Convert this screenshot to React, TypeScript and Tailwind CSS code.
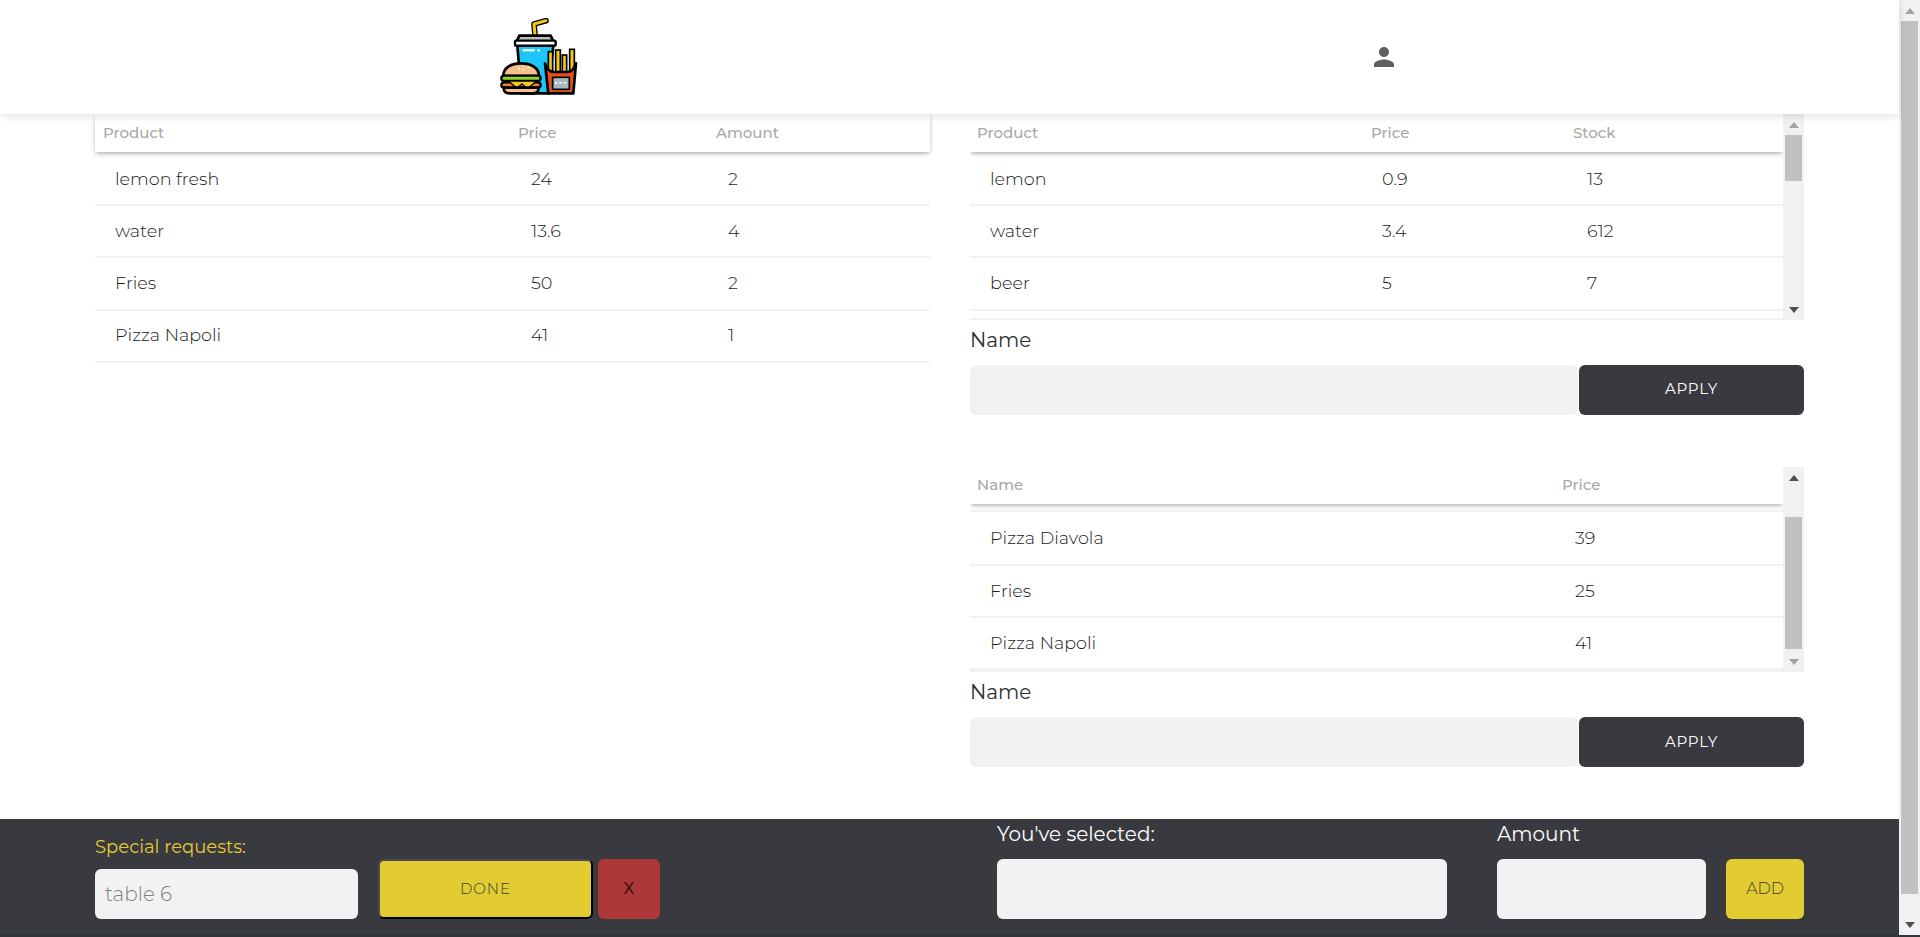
const FONT = "font-['Montserrat','Inter','Liberation_Sans',sans-serif]";

const CART = [
  ['lemon fresh', '24', '2'],
  ['water', '13.6', '4'],
  ['Fries', '50', '2'],
  ['Pizza Napoli', '41', '1'],
];

const DRINKS = [
  ['lemon', '0.9', '13'],
  ['water', '3.4', '612'],
  ['beer', '5', '7'],
];

const FOOD = [
  ['Pizza Diavola', '39'],
  ['Fries', '25'],
  ['Pizza Napoli', '41'],
];

// burger + drink + fries logo
const Logo = () => (
  <svg width="84" height="84" viewBox="171 45 252 252">
    <path d="M285 105 L282 72 L318 62" fill="none" stroke="#000" strokeWidth="17" strokeLinecap="round" strokeLinejoin="round" />
    <path d="M285 105 L282 72 L318 62" fill="none" stroke="#f5c71a" strokeWidth="9" strokeLinecap="round" strokeLinejoin="round" />
    <path d="M232 136 L244 280 H325 L340 136 Z" fill="#1cc6fb" stroke="#000" strokeWidth="8" />
    <path d="M238 107 H332 L340 124 H230 Z" fill="#bdbdbd" stroke="#000" strokeWidth="8" strokeLinejoin="round" />
    <rect x="225" y="122" width="122" height="15" rx="3" fill="#fff" stroke="#000" strokeWidth="7" />
    <rect x="248" y="148" width="36" height="6" fill="#fff" />
    <rect x="292" y="148" width="8" height="6" fill="#fff" />
    <path d="M190 228 C190 203 212 190 243 190 C274 190 297 203 297 228 Z" fill="#f6c08a" stroke="#000" strokeWidth="8" strokeLinejoin="round" />
    <rect x="234" y="203" width="6" height="5" fill="#fff" />
    <rect x="262" y="200" width="6" height="5" fill="#fff" />
    <rect x="248" y="207" width="5" height="4" fill="#fff" />
    <rect x="184" y="227" width="118" height="16" rx="8" fill="#8fd42e" stroke="#000" strokeWidth="7" />
    <rect x="184" y="247" width="118" height="16" rx="8" fill="#ef7d3b" stroke="#000" strokeWidth="7" />
    <path d="M205 243 H290 L262 266 L246 252 L230 264 Z" fill="#f5c71a" stroke="#000" strokeWidth="4" strokeLinejoin="round" />
    <path d="M191 263 H296 C296 274 289 280 278 280 H209 C198 280 191 274 191 263 Z" fill="#f6c08a" stroke="#000" strokeWidth="8" strokeLinejoin="round" />
    <rect x="325" y="155" width="13" height="62" fill="#f5c71a" stroke="#000" strokeWidth="5" />
    <rect x="347" y="150" width="14" height="67" fill="#f5c71a" stroke="#000" strokeWidth="5" />
    <rect x="367" y="165" width="13" height="52" fill="#f5c71a" stroke="#000" strokeWidth="5" />
    <rect x="389" y="148" width="14" height="69" fill="#f5c71a" stroke="#000" strokeWidth="5" />
    <path d="M315 190 C322 210 332 216 342 216 H382 C394 216 402 208 408 190 L400 280 H325 Z" fill="#e84e1b" stroke="#000" strokeWidth="8" strokeLinejoin="round" />
    <rect x="338" y="232" width="50" height="36" fill="#a9b8bf" stroke="#000" strokeWidth="5" />
    <rect x="345" y="246" width="7" height="5" fill="#fff" />
    <rect x="358" y="246" width="7" height="5" fill="#fff" />
    <rect x="371" y="246" width="7" height="5" fill="#fff" />
  </svg>
);

const UserIcon = () => (
  <svg width="30" height="30" viewBox="0 0 24 24" fill="#5f5f5f">
    <path d="M12 12c2.21 0 4-1.79 4-4s-1.79-4-4-4-4 1.79-4 4 1.79 4 4 4zm0 2c-2.67 0-8 1.34-8 4v2h16v-2c0-2.66-5.33-4-8-4z" />
  </svg>
);

const Arrow = ({ up, color }: { up?: boolean; color: string }) => (
  <div className="h-[21px] flex items-center justify-center">
    <svg width="10" height="6" viewBox="0 0 10 6">
      <path d={up ? 'M5 0 L10 6 H0 Z' : 'M0 0 H10 L5 6 Z'} fill={color} />
    </svg>
  </div>
);

// hand drawn version of the browser's scrollbar
const ScrollTrack = ({ top, height, upColor, downColor }: { top: number; height: number; upColor: string; downColor: string }) => (
  <div className="w-[21px] h-full bg-[#f1f1f1] flex flex-col shrink-0">
    <Arrow up color={upColor} />
    <div className="flex-1 px-[2px]">
      <div className="bg-[#c1c1c1]" style={{ marginTop: top, height }} />
    </div>
    <Arrow color={downColor} />
  </div>
);

const HeaderCell = ({ children, className }: { children: React.ReactNode; className?: string }) => (
  <div className={`text-[15px] font-medium text-[#a8a8a8] ${className ?? ''}`}>{children}</div>
);

const Field = ({ label, lift }: { label: string; lift?: boolean }) => (
  <div>
    <div className="text-[20px] leading-[24px] text-[#2e2f33] mt-[8px] mb-[13px]">{label}</div>
    <div className="flex h-[50px]">
      <div className="w-[608px] bg-[#f2f2f2] rounded-[6px]" />
      <button className={`ml-[1px] flex-1 bg-[#393a3f] rounded-[6px] text-white text-[15px] tracking-[0.8px] ${lift ? 'pb-[2px]' : ''}`}>APPLY</button>
    </div>
  </div>
);

const HEAD_SHADOW = 'shadow-[0_2px_5px_-1px_rgba(0,0,0,0.4)]';
const ROW_TEXT = 'text-[17.6px] font-light text-[#18191c]';

export default function App() {
  return (
    <div className={`h-[937px] w-full overflow-hidden flex flex-col bg-white text-[#393a3f] ${FONT}`}>
      <div className="h-[935px] flex">
        <div className="w-[1899px] h-full flex flex-col">
          {/* top nav */}
          <header className="h-[114px] shrink-0 bg-white shadow-[0_2px_8px_rgba(0,0,0,0.12)] relative z-10 flex items-center pl-[497px]">
            <Logo />
            <div className="ml-[788px]">
              <UserIcon />
            </div>
          </header>

          <main className="flex-1 flex pl-[95px]">
            {/* cart */}
            <section className="w-[835px]">
              <div className={`h-[38px] flex items-center pl-[8px] ${HEAD_SHADOW}`}>
                <HeaderCell className="w-[415px]">Product</HeaderCell>
                <HeaderCell className="w-[198px]">Price</HeaderCell>
                <HeaderCell>Amount</HeaderCell>
              </div>
              <div className="h-[2px]" />
              {CART.map((row) => (
                <div key={row[0]} className={`h-[52.2px] flex items-center border-b-2 border-[#f1f1f1] pl-[20px] ${ROW_TEXT}`}>
                  <div className="w-[416px]">{row[0]}</div>
                  <div className="w-[197px]">{row[1]}</div>
                  <div>{row[2]}</div>
                </div>
              ))}
            </section>

            <section className="w-[834px] ml-[40px]">
              {/* drinks */}
              <div className="h-[206px] flex bg-[#f1f1f1]">
                <div className="flex-1 overflow-hidden">
                  <div className={`h-[38px] bg-white flex items-center pl-[7px] pr-[5px] relative ${HEAD_SHADOW}`}>
                    <HeaderCell className="w-[394px]">Product</HeaderCell>
                    <HeaderCell className="w-[202px]">Price</HeaderCell>
                    <HeaderCell>Stock</HeaderCell>
                  </div>
                  <div className="h-[2px] bg-white" />
                  {DRINKS.map((row) => (
                    <div key={row[0]} className={`h-[52.2px] bg-white flex items-center border-b-2 border-[#f1f1f1] pl-[20px] ${ROW_TEXT}`}>
                      <div className="w-[392px]">{row[0]}</div>
                      <div className="w-[205px]">{row[1]}</div>
                      <div>{row[2]}</div>
                    </div>
                  ))}
                  <div className="h-[7.4px] bg-white" />
                </div>
                <ScrollTrack top={0} height={46} upColor="#a3a3a3" downColor="#505050" />
              </div>
              <Field label="Name" lift />

              {/* food */}
              <div className="h-[205px] flex bg-[#f1f1f1] mt-[52px]">
                <div className="flex-1 overflow-hidden">
                  <div className={`h-[37px] bg-white flex items-center pl-[7px] pr-[5px] relative ${HEAD_SHADOW}`}>
                    <HeaderCell className="w-[585px]">Name</HeaderCell>
                    <HeaderCell>Price</HeaderCell>
                  </div>
                  <div className="h-[6px] bg-white" />
                  <div className="h-[2px] bg-[#f1f1f1]" />
                  <div>
                    {FOOD.map((row) => (
                      <div key={row[0]} className={`h-[52px] first:h-[54px] bg-white flex items-center border-b-2 border-[#f1f1f1] pl-[20px] ${ROW_TEXT}`}>
                        <div className="w-[585px]">{row[0]}</div>
                        <div>{row[1]}</div>
                      </div>
                    ))}
                  </div>
                </div>
                <ScrollTrack top={29} height={132} upColor="#505050" downColor="#a3a3a3" />
              </div>
              <Field label="Name" />
            </section>
          </main>

          {/* bottom bar */}
          <footer className="h-[116px] shrink-0 bg-[#393a3f] flex">
            <div className="w-[358px] pl-[95px] pt-[18px]">
              <div className="text-[18px] leading-[20px] text-[#e3cb32]">Special requests:</div>
              <div className="mt-[12px] h-[50px] w-[263px] bg-[#f2f2f2] rounded-[6px] flex items-center px-[10px] text-[20px] text-[#7f7f7f] font-light">table 6</div>
            </div>
            <div className="flex pt-[40px] ml-[20px]">
              <button className="w-[215px] h-[60px] bg-[#e3cb32] rounded-[6px] border-2 border-t-[#4a4b50] border-l-[#4a4b50] border-r-black border-b-black text-[15px] font-light tracking-[1px]">DONE</button>
              <button className="w-[62px] h-[60px] ml-[5px] bg-[#ad3838] rounded-[6px] text-[16px] font-medium text-[#3a1212]">X</button>
            </div>
            <div className="ml-[337px] pt-[3px]">
              <div className="text-[20px] leading-[24px] text-white">You've selected:</div>
              <div className="mt-[13px] w-[450px] h-[60px] bg-[#f2f2f2] rounded-[6px]" />
            </div>
            <div className="ml-[50px] pt-[3px]">
              <div className="text-[20px] leading-[24px] text-white">Amount</div>
              <div className="mt-[13px] w-[209px] h-[60px] bg-[#f2f2f2] rounded-[6px]" />
            </div>
            <div className="ml-[20px] pt-[40px]">
              <button className="w-[78px] h-[60px] bg-[#e3cb32] rounded-[6px] text-[16px] font-light">ADD</button>
            </div>
          </footer>
        </div>
        <ScrollTrack top={0} height={873} upColor="#a3a3a3" downColor="#505050" />
      </div>
      <div className="h-[2px] bg-[#2d3538]" />
    </div>
  );
}
